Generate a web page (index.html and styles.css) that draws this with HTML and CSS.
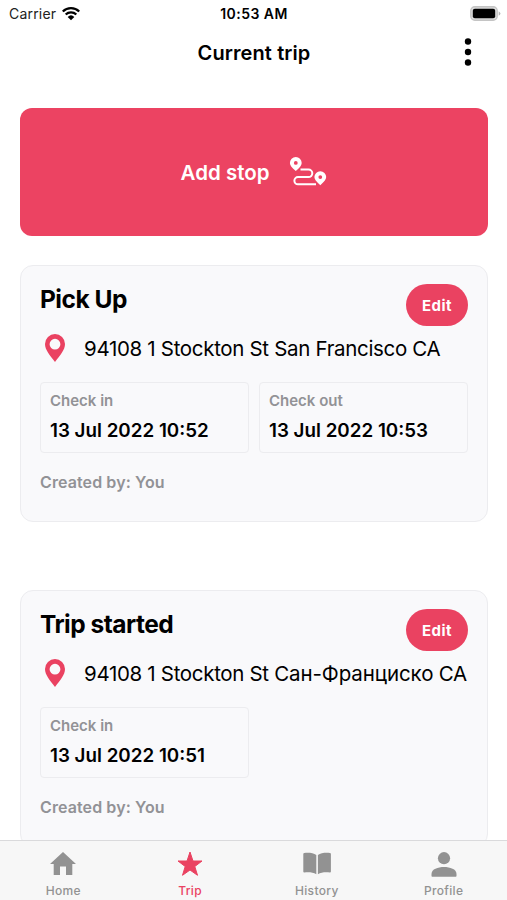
FILE: index.html
```html
<!DOCTYPE html>
<html lang="en">
<head>
  <meta charset="UTF-8">
  <title>Current trip</title>
  <link rel="stylesheet" href="styles.css">
</head>
<body>
  <div class="screen">
    <!-- Status bar -->
    <div class="statusBar">
      <div class="carrier">
        <span>Carrier</span>
        <svg class="wifi" width="20" height="15" viewBox="0 0 20 15">
          <path d="M1.8 5.5a11.8 11.8 0 0 1 16.4 0M4.7 8.5a7.6 7.6 0 0 1 10.6 0" fill="none" stroke="#000" stroke-width="2.3"/>
          <path d="M10 14.2 6.7 10.9a4.8 4.8 0 0 1 6.6 0z"/>
        </svg>
      </div>
      <span class="clock">10:53 AM</span>
      <svg class="battery" width="31" height="15" viewBox="0 0 31 15">
        <rect x=".8" y=".8" width="26.4" height="13.4" rx="4" fill="#ddd" stroke="#c4c4c4" stroke-width="1.4"/>
        <rect x="2.8" y="2.8" width="22.4" height="9.4" rx="2"/>
        <path d="M28.7 5.2q3.4 2.3 0 4.6z" fill="#b5b5b5"/>
      </svg>
    </div>

    <header class="header">
      <h1>Current trip</h1>
      <button class="menuBtn" aria-label="Menu">
        <svg width="8" height="28" viewBox="0 0 8 28">
          <circle cx="4" cy="3.5" r="3.2"/><circle cx="4" cy="14" r="3.2"/><circle cx="4" cy="24.5" r="3.2"/>
        </svg>
      </button>
    </header>

    <main class="content">
      <button class="addStop">
        <span>Add stop</span>
        <svg width="38" height="30" viewBox="0 0 38 30">
          <path d="M11.500 12.500h8a3.800 3.800 0 0 1 0 7.600H9a3.600 3.600 0 0 0 0 7.200h18" fill="none" stroke="#fff" stroke-width="2"/>
          <path fill="#fff" fill-rule="evenodd" d="M6.800 14C3 10.500.9 8.500.9 5.900a5.900 5.900 0 0 1 11.800 0C12.700 8.500 10.600 10.500 6.800 14zM6.800 4a1.900 1.900 0 1 0 0 3.800 1.900 1.900 0 0 0 0-3.800zM31.300 28.200c-3.800-3.500-5.900-5.500-5.900-8.100a5.900 5.900 0 0 1 11.800 0c0 2.600-2.100 4.600-5.900 8.100zm0-10a1.900 1.900 0 1 0 0 3.800 1.900 1.900 0 0 0 0-3.800z"/>
        </svg>
      </button>

      <section class="card">
        <div class="cardTop">
          <h2>Pick Up</h2>
          <button class="editBtn">Edit</button>
        </div>
        <div class="address">
          <svg width="20" height="28" viewBox="0 0 20 28">
            <path fill="#ea4261" fill-rule="evenodd" d="M10 28C5 21.500 0 16 0 10a10 10 0 0 1 20 0c0 6-5 11.500-10 18zM10 4.800a5.400 5.400 0 1 0 0 10.800 5.400 5.400 0 0 0 0-10.800z"/>
          </svg>
          <span>94108 1 Stockton St San Francisco CA</span>
        </div>
        <div class="times">
          <div class="timeBox">
            <div class="label">Check in</div>
            <div class="date">13 Jul 2022 10:52</div>
          </div>
          <div class="timeBox">
            <div class="label">Check out</div>
            <div class="date">13 Jul 2022 10:53</div>
          </div>
        </div>
        <div class="createdBy">Created by: You</div>
      </section>

      <section class="card">
        <div class="cardTop">
          <h2>Trip started</h2>
          <button class="editBtn">Edit</button>
        </div>
        <div class="address">
          <svg width="20" height="28" viewBox="0 0 20 28">
            <path fill="#ea4261" fill-rule="evenodd" d="M10 28C5 21.500 0 16 0 10a10 10 0 0 1 20 0c0 6-5 11.500-10 18zM10 4.800a5.400 5.400 0 1 0 0 10.800 5.400 5.400 0 0 0 0-10.800z"/>
          </svg>
          <span>94108 1 Stockton St <span class="city" lang="ru">Сан-Франциско</span> CA</span>
        </div>
        <div class="times">
          <div class="timeBox">
            <div class="label">Check in</div>
            <div class="date">13 Jul 2022 10:51</div>
          </div>
        </div>
        <div class="createdBy">Created by: You</div>
      </section>
    </main>

    <!-- Bottom navigation -->
    <nav class="tabBar">
      <a class="tab">
        <svg width="28" height="26" viewBox="0 0 28 26">
          <path d="M14 1 27 13h-3.700v11h-6.300v-8.500h-6V24H4.700V13H1z"/>
        </svg>
        <span>Home</span>
      </a>
      <a class="tab active">
        <svg width="28" height="26" viewBox="0 0 28 26">
          <path d="M14 1l3 9h9l-7.200 5.500 2.700 8.800L14 19l-7.500 5.300 2.700-8.800L2 10h9z" stroke="currentColor" stroke-linejoin="round"/>
        </svg>
        <span>Trip</span>
      </a>
      <a class="tab">
        <svg width="28" height="26" viewBox="0 0 28 26">
          <path d="M13.300 4v19.300C10 21.300 6 21 1.200 21.500Q.3 21.500.3 20.500V3q0-1 1-1C6 1.600 10.500 2 13.300 4zM14.900 4v19.300c3.300-2 7.300-2.300 12.100-1.800q.9 0 .9-1V3q0-1-1-1c-4.700-.400-9.200 0-12 2z"/>
        </svg>
        <span>History</span>
      </a>
      <a class="tab">
        <svg width="28" height="26" viewBox="0 0 28 26">
          <circle cx="14" cy="7.200" r="6.100"/>
          <path d="M1.500 25v-2C1.500 18 8 16 14 16s12.500 2 12.500 7v2q0 .7-.7.7H2.200q-.7 0-.7-.7z"/>
        </svg>
        <span>Profile</span>
      </a>
    </nav>
  </div>
</body>
</html>
```
FILE: styles.css
```css
* {
  box-sizing: border-box;
}

html, body {
  margin: 0;
  height: 100%;
  overflow: hidden;
}

body {
  font-family: Inter, "Liberation Sans", sans-serif;
  color: #000;
  background-color: #fff;
}

h1, h2 {
  margin: 0;
}

button {
  font-family: inherit;
  border: none;
  padding: 0;
  cursor: pointer;
}

svg {
  display: block;
  flex: none;
}

.screen {
  display: flex;
  flex-direction: column;
  height: 100vh;
}

.statusBar {
  display: grid;
  grid-template-columns: 1fr auto 1fr;
  align-items: center;
  height: 27px;
  flex: none;
  padding: 0 6px 0 9px;
  font-size: 14px;
}

.carrier {
  display: flex;
  align-items: center;
  gap: 5px;
  color: #222;
  letter-spacing: 0.2px;
}

.clock {
  padding-right: 2px;
  font-weight: 600;
  letter-spacing: 0.45px;
}

.battery {
  justify-self: end;
}

.header {
  display: grid;
  grid-template-columns: 1fr auto 1fr;
  align-items: center;
  height: 50px;
  flex: none;
}

.header h1 {
  grid-column: 2;
  padding: 1px 0 0 1px;
  font-size: 20px;
  font-weight: 600;
  letter-spacing: 0.1px;
}

.menuBtn {
  justify-self: end;
  margin-right: 35px;
  background: none;
}

.content {
  flex: 1;
  min-height: 0;
  overflow: hidden;
  padding: 31px 19px 0 20px;
}

.addStop {
  display: flex;
  align-items: center;
  justify-content: center;
  gap: 20px;
  width: 100%;
  height: 128px;
  border-radius: 12px;
  background-color: #ec4362;
  color: #fff;
  font-size: 20.5px;
  font-weight: 600;
}

.addStop span {
  padding-top: 1px;
}

.card {
  height: 257px;
  margin: 29px 0 68px;
  padding: 18px 19px;
  border: 1px solid #ececef;
  border-radius: 13px;
  background-color: #f9f9fb;
}

.cardTop {
  display: flex;
  justify-content: space-between;
  height: 42px;
}

.cardTop h2 {
  font-size: 24.5px;
  font-weight: 650;
  line-height: 30px;
  letter-spacing: -0.5px;
}

.editBtn {
  width: 62px;
  height: 42px;
  border-radius: 21px;
  background-color: #ea4261;
  color: #fff;
  font-size: 15px;
  font-weight: 700;
  letter-spacing: 0.5px;
}

.address {
  display: flex;
  align-items: center;
  gap: 19px;
  height: 44px;
  padding-left: 5px;
  font-size: 20.5px;
  letter-spacing: -0.32px;
  white-space: nowrap;
}

.address span {
  padding-top: 1px;
}

.city {
  letter-spacing: -0.1px;
}

.times {
  display: grid;
  grid-template-columns: 1fr 1fr;
  gap: 10px;
  margin-top: 12px;
}

.timeBox {
  height: 71px;
  padding: 9px;
  border: 1px solid #ececef;
  border-radius: 4px;
}

.label {
  font-size: 15px;
  font-weight: 600;
  line-height: 18px;
  color: #929296;
}

.date {
  margin-top: 9px;
  font-size: 18.8px;
  font-weight: 620;
  line-height: 24px;
}

.createdBy {
  margin-top: 20px;
  font-size: 16px;
  font-weight: 600;
  line-height: 19px;
  letter-spacing: 0.1px;
  color: #929296;
}

.tabBar {
  display: grid;
  grid-template-columns: repeat(4, 1fr);
  flex: none;
  height: 60px;
  border-top: 1px solid #dadadc;
  background-color: #f7f7f7;
}

.tab {
  display: flex;
  flex-direction: column;
  align-items: center;
  gap: 7px;
  padding-top: 10px;
  color: #929292;
  font-size: 12px;
  font-weight: 500;
  line-height: 14px;
  letter-spacing: 0.35px;
}

.tab svg {
  fill: currentColor;
}

.tab.active {
  color: #ea4261;
}
```
